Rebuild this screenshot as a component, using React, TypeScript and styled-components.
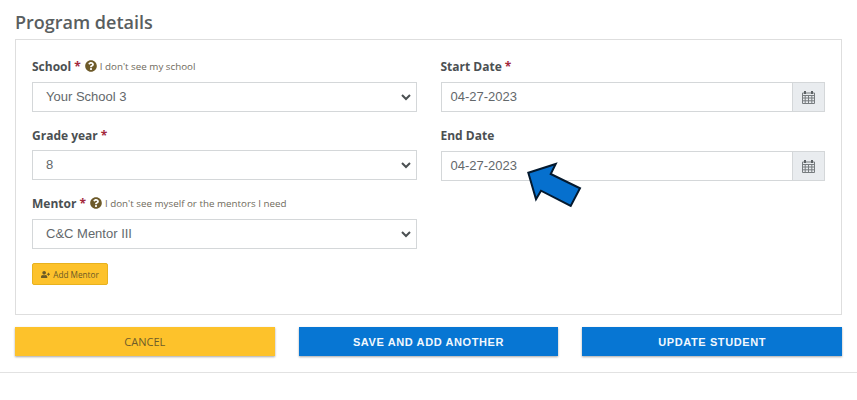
import * as React from 'react';
import styled, {createGlobalStyle} from 'styled-components';
import {FaQuestionCircle, FaUserPlus} from 'react-icons/fa';

const GlobalStyle = createGlobalStyle`
    html, body {
        margin: 0;
        background: #fff;
    }
`;

const Page = styled.div`
    position: relative;
    width: 857px;
    height: 400px;
    overflow: hidden;
    font-family: "Open Sans", sans-serif;
`;

const Content = styled.div`
    padding: 0 15px;
`;

const Heading = styled.h2`
    margin: 0;
    height: 39px;
    padding-top: 10px;
    box-sizing: border-box;
    font-size: 18px;
    line-height: 24px;
    font-weight: 600;
    color: #595e60;
`;

const Panel = styled.div`
    box-sizing: border-box;
    height: 276px;
    border: 1px solid #dedede;
    padding: 16px 16px 0;
    display: grid;
    grid-template-columns: 1fr 1fr;
    column-gap: 24px;
    align-content: start;
`;

const Column = styled.div`
    display: flex;
    flex-direction: column;
`;

const Field = styled.div<{$height: number}>`
    height: ${p => p.$height}px;
`;

const LabelRow = styled.div<{$tight?: boolean}>`
    display: flex;
    align-items: center;
    height: 20px;
    margin-bottom: ${p => p.$tight ? 5 : 6}px;
`;

const Label = styled.label`
    font-size: 12px;
    font-weight: 700;
    color: #4b5052;
`;

const Required = styled.span`
    color: #a3283c;
    margin-left: 3px;
`;

const Help = styled.span`
    display: inline-flex;
    align-items: center;
    margin-left: 4px;
    font-size: 9.8px;
    color: #6f6a5c;

    svg {
        color: #6d5a2a;
        margin-right: 3px;
        width: 12px;
        height: 12px;
    }
`;

const SelectBox = styled.div`
    box-sizing: border-box;
    height: 30px;
    border: 1px solid #d4d7d9;
    padding: 0 4px 1px 13px;
    display: flex;
    align-items: center;
    justify-content: space-between;
    font-family: "Liberation Sans", sans-serif;
    font-size: 13px;
    color: #63686b;
`;

const InputGroup = styled.div`
    box-sizing: border-box;
    height: 30px;
    border: 1px solid #d4d7d9;
    display: flex;
    align-items: stretch;
`;

const DateInput = styled.div`
    flex: 1;
    padding: 0 0 1px 9px;
    display: flex;
    align-items: center;
    font-family: "Liberation Sans", sans-serif;
    font-size: 13px;
    color: #63686b;
`;

const Addon = styled.div`
    width: 31px;
    background: #e9ecef;
    border-left: 1px solid #d4d7d9;
    display: flex;
    align-items: center;
    justify-content: center;
`;

const AddButton = styled.button`
    box-sizing: border-box;
    width: 76px;
    height: 22px;
    margin-top: 14px;
    padding: 0;
    border: 1px solid #e8b21e;
    border-radius: 2px;
    background: #fdc22b;
    color: #6b5a26;
    font-family: "Open Sans", sans-serif;
    font-size: 8.2px;
    display: flex;
    align-items: center;
    justify-content: center;

    svg {
        width: 9px;
        height: 9px;
        margin-right: 3px;
    }
`;

const Actions = styled.div`
    display: grid;
    grid-template-columns: repeat(3, 1fr);
    column-gap: 24px;
    margin-top: 12px;
`;

const ActionButton = styled.button<{$primary?: boolean}>`
    height: 29px;
    padding: 0;
    border: 0;
    background: ${p => p.$primary ? '#0776d3' : '#fdc22b'};
    color: ${p => p.$primary ? '#f2f8fd' : '#6d5c2a'};
    font-family: ${p => p.$primary ? '"Liberation Sans", sans-serif' : '"Open Sans", sans-serif'};
    font-size: 11px;
    font-weight: ${p => p.$primary ? 700 : 400};
    letter-spacing: ${p => p.$primary ? '0.6px' : '0'};
    box-shadow: 0 1px 2px rgba(0, 0, 0, 0.35);
`;

const Rule = styled.hr`
    margin: 16px 0 0;
    border: 0;
    border-top: 1px solid #e2e2e2;
`;

const Arrow = styled.svg`
    position: absolute;
    left: 520px;
    top: 158px;
    width: 70px;
    height: 56px;
`;

const Chevron = () => (
    <svg width="12" height="8" viewBox="0 0 12 8">
        <path d="M2 2 L6 6 L10 2" fill="none" stroke="#4b5052" strokeWidth="2" />
    </svg>
);

const CalendarIcon = () => (
    <svg width="13" height="14" viewBox="0 0 13 14">
        <path
            d="M.5 3h12v10.5H.5zM.5 5.5h12M.5 8h12M.5 10.8h12M3.2 5.5v8M6.5 5.5v8M9.8 5.5v8"
            fill="none"
            stroke="#777c7f"
            strokeWidth="1"
        />
        <path d="M3 1v3M10 1v3" stroke="#5d6265" strokeWidth="2" />
    </svg>
);

const SelectField = ({value}: {value: string}) => (
    <SelectBox>
        {value}
        <Chevron />
    </SelectBox>
);

const DateField = ({value}: {value: string}) => (
    <InputGroup>
        <DateInput>{value}</DateInput>
        <Addon><CalendarIcon /></Addon>
    </InputGroup>
);

export default function App() {
    return (
        <Page>
            <GlobalStyle />
            <Content>
                <Heading>Program details</Heading>
                <Panel>
                    <Column>
                        <Field $height={69}>
                            <LabelRow>
                                <Label>School<Required>*</Required></Label>
                                <Help><FaQuestionCircle />I don't see my school</Help>
                            </LabelRow>
                            <SelectField value="Your School 3" />
                        </Field>
                        <Field $height={68}>
                            <LabelRow $tight>
                                <Label>Grade year<Required>*</Required></Label>
                            </LabelRow>
                            <SelectField value="8" />
                        </Field>
                        <Field $height={56}>
                            <LabelRow>
                                <Label>Mentor<Required>*</Required></Label>
                                <Help><FaQuestionCircle />I don't see myself or the mentors I need</Help>
                            </LabelRow>
                            <SelectField value="C&C Mentor III" />
                        </Field>
                        <AddButton><FaUserPlus />Add Mentor</AddButton>
                    </Column>
                    <Column>
                        <Field $height={69}>
                            <LabelRow>
                                <Label>Start Date<Required>*</Required></Label>
                            </LabelRow>
                            <DateField value="04-27-2023" />
                        </Field>
                        <Field $height={68}>
                            <LabelRow>
                                <Label>End Date</Label>
                            </LabelRow>
                            <DateField value="04-27-2023" />
                        </Field>
                    </Column>
                </Panel>
                <Actions>
                    <ActionButton>CANCEL</ActionButton>
                    <ActionButton $primary>SAVE AND ADD ANOTHER</ActionButton>
                    <ActionButton $primary>UPDATE STUDENT</ActionButton>
                </Actions>
            </Content>
            <Rule />
            <Arrow viewBox="520 158 70 56">
                <path
                    d="M528.3 172.7 L555.7 164 L550.7 174 L580 188.3 L570.7 206 L541 190.7 L536 199.3 Z"
                    fill="#0670ce"
                    stroke="#04192e"
                    strokeWidth="2"
                    strokeLinejoin="miter"
                />
            </Arrow>
        </Page>
    );
}
